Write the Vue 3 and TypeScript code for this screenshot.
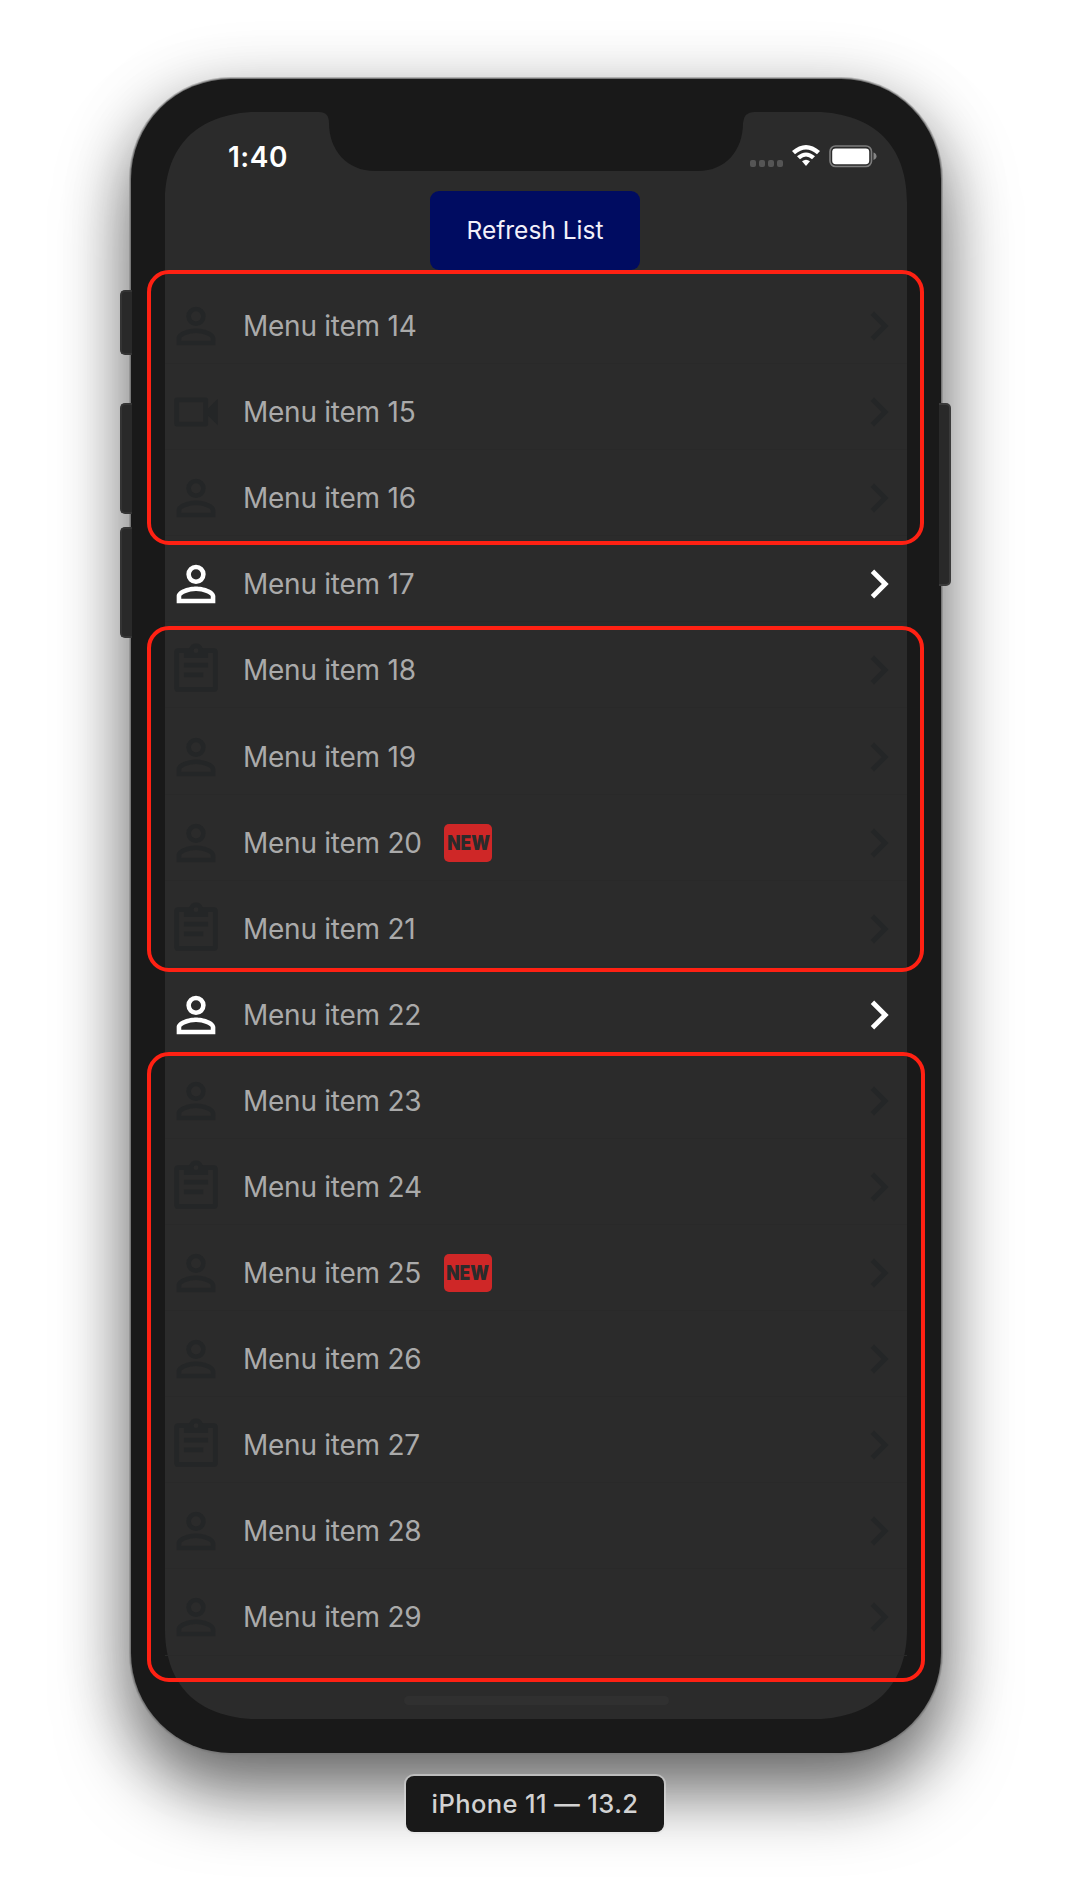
<script setup lang="ts">
type IconName = 'person' | 'video' | 'clipboard'

interface MenuItem {
  id: number
  icon: IconName
  active?: boolean
  isNew?: boolean
}

const icons: Record<IconName, string> = {
  person:
    'M12 4a4 4 0 1 1 0 8 4 4 0 0 1 0-8m0 1.9a2.1 2.1 0 1 0 0 4.2 2.1 2.1 0 0 0 0-4.2M12 13c2.67 0 8 1.34 8 4v3H4v-3c0-2.66 5.33-4 8-4m0 1.9c-2.97 0-6.1 1.46-6.1 2.1v1.1h12.2V17c0-.64-3.13-2.1-6.1-2.1',
  video:
    'M15 8v8H5V8h10m1-2H4a1 1 0 0 0-1 1v10a1 1 0 0 0 1 1h12a1 1 0 0 0 1-1v-3.5l4 4v-11l-4 4V7a1 1 0 0 0-1-1z',
  clipboard:
    'M19.4 3h-4.58C14.4 1.84 13.3 1 12 1s-2.4.84-2.82 2H4.6A1.6 1.6 0 0 0 3 4.6v14.8A1.6 1.6 0 0 0 4.6 21h14.8a1.6 1.6 0 0 0 1.6-1.6V4.6A1.6 1.6 0 0 0 19.4 3M12 3a1 1 0 1 1 0 2 1 1 0 0 1 0-2M7 7h10V5h2v14H5V5h2v2m10 4H7V9h10v2m-2 4H7v-2h8v2z',
}

const items: MenuItem[] = [
  { id: 14, icon: 'person' },
  { id: 15, icon: 'video' },
  { id: 16, icon: 'person' },
  { id: 17, icon: 'person', active: true },
  { id: 18, icon: 'clipboard' },
  { id: 19, icon: 'person' },
  { id: 20, icon: 'person', isNew: true },
  { id: 21, icon: 'clipboard' },
  { id: 22, icon: 'person', active: true },
  { id: 23, icon: 'person' },
  { id: 24, icon: 'clipboard' },
  { id: 25, icon: 'person', isNew: true },
  { id: 26, icon: 'person' },
  { id: 27, icon: 'clipboard' },
  { id: 28, icon: 'person' },
  { id: 29, icon: 'person' },
]
</script>

<template>
  <main class="stage">
    <div class="device">
      <span class="side-key mute"></span>
      <span class="side-key vol-up"></span>
      <span class="side-key vol-down"></span>
      <span class="side-key power"></span>

      <div class="screen">
        <svg class="glass" viewBox="0 0 742 1607" aria-hidden="true">
          <path
            d="M86 0H154Q164 0 164 11C164 38 182 59 210 59H533C561 59 578 38 578 11Q579 0 589 0H656C716 4 742 40 742 90V1517C742 1567 716 1603 656 1607H86C26 1603 0 1567 0 1517V90C0 40 26 4 86 0Z"
          />
        </svg>

        <header class="status">
          <span class="clock">1:40</span>
          <div class="indicators">
            <span class="cell"><i></i><i></i><i></i><i></i></span>
            <svg class="wifi" viewBox="0 0 28 22" aria-hidden="true">
              <path d="M0 6.1Q14-5.9 28 6.1L25 9.2Q14-.4 3 9.2Z" />
              <path d="M5 11.2Q14 3.6 23 11.2L20 14.2Q14 9 8 14.2Z" />
              <path d="M10 16.3Q14 13.1 18 16.3L14 21Z" />
            </svg>
            <svg class="battery" viewBox="0 0 48 23" aria-hidden="true">
              <rect x="1" y="1" width="41.5" height="20.5" rx="5.5" fill="none" stroke="#7d7d7d" stroke-width="1.6" />
              <rect x="3.2" y="3.4" width="37" height="15.8" rx="3.4" fill="#fff" />
              <path d="M44.5 7.6Q47.5 8.6 47.5 11.3T44.5 15Z" fill="#858585" />
            </svg>
          </div>
        </header>

        <button class="refresh" type="button"><span>Refresh List</span></button>

        <ul class="menu">
          <li v-for="item in items" :key="item.id" class="row" :class="{ active: item.active }">
            <svg class="icon" viewBox="0 0 24 24" aria-hidden="true"><path :d="icons[item.icon]" /></svg>
            <span class="label">Menu item {{ item.id }}</span>
            <span v-if="item.isNew" class="badge"><b>NEW</b></span>
            <svg class="icon chevron" viewBox="0 0 24 24" aria-hidden="true">
              <path d="M10 6 8.59 7.41 13.17 12l-4.58 4.59L10 18l6-6z" />
            </svg>
          </li>
        </ul>

        <div class="home-bar"></div>
      </div>
    </div>

    <div class="caption">iPhone 11 — 13.2</div>

    <div class="mark mark-a"></div>
    <div class="mark mark-b"></div>
    <div class="mark mark-c"></div>
  </main>
</template>

<style>
body {
  margin: 0;
  background: #fff;
}
</style>

<style scoped>
.stage {
  position: relative;
  box-sizing: border-box;
  width: 1072px;
  height: 1904px;
  padding-top: 79px;
  overflow: hidden;
  display: flex;
  flex-direction: column;
  align-items: center;
  background: #fff;
  font-family: Inter, 'Liberation Sans', sans-serif;
}
.device {
  position: relative;
  box-sizing: border-box;
  width: 810px;
  height: 1674px;
  padding: 33px 34px 34px;
  border-radius: 100px;
  background: #191919;
  box-shadow:
    0 0 0 1px #777,
    0 0 0 2px rgba(120, 120, 120, 0.45),
    0 40px 70px rgba(0, 0, 0, 0.52),
    0 10px 70px rgba(0, 0, 0, 0.2);
}
.side-key {
  position: absolute;
  box-sizing: border-box;
  width: 12px;
  background: #292929;
  border: 2px solid #343434;
  border-right: 0;
  border-radius: 5px 0 0 5px;
  left: -11px;
}
.mute {
  top: 211px;
  height: 65px;
}
.vol-up {
  top: 324px;
  height: 111px;
}
.vol-down {
  top: 448px;
  height: 111px;
}
.power {
  top: 324px;
  left: auto;
  right: -10px;
  height: 183px;
  border: 2px solid #3a3a3a;
  border-left: 0;
  border-radius: 0 5px 5px 0;
}
.screen {
  position: relative;
  width: 742px;
  height: 1607px;
  display: flex;
  flex-direction: column;
  align-items: center;
}
.glass {
  position: absolute;
  inset: 0;
  width: 742px;
  height: 1607px;
  fill: #2b2b2b;
}
.status {
  position: relative;
  box-sizing: border-box;
  width: 100%;
  height: 79px;
  padding: 0 30px 0 63px;
  display: flex;
  justify-content: space-between;
}
.clock {
  margin-top: 28px;
  line-height: 34px;
  color: #fff;
  font-size: 28px;
  font-weight: 600;
  letter-spacing: 0.5px;
}
.indicators {
  display: flex;
  align-items: flex-start;
  padding-top: 33px;
}
.cell {
  display: flex;
  gap: 3px;
  margin: 15px 9px 0 0;
}
.cell i {
  width: 6px;
  height: 7px;
  border-radius: 2px;
  background: #555;
}
.wifi {
  width: 28px;
  height: 22px;
  margin-right: 9px;
  fill: #fff;
}
.battery {
  width: 48px;
  height: 23px;
}
.refresh {
  position: relative;
  width: 210px;
  height: 79px;
  margin-right: 2px;
  padding: 0;
  border: 0;
  border-radius: 9px;
  background: #000c61;
  color: #f3f1fa;
  font: 400 24.5px/79px Inter, 'Liberation Sans', sans-serif;
}
.menu {
  position: relative;
  width: 100%;
  margin: 8px 0 0;
  padding: 0;
  list-style: none;
}
.row {
  box-sizing: border-box;
  height: 86.1px;
  padding: 11px 0 0 1.5px;
  display: flex;
  align-items: center;
  border-bottom: 1px solid #292929;
}
.icon {
  flex: none;
  width: 58px;
  height: 58px;
  fill: #242627;
}
.active .icon {
  fill: #fff;
}
.label {
  margin-left: 18.5px;
  color: #aaa;
  font-size: 28px;
  line-height: 34px;
  letter-spacing: -0.25px;
  white-space: nowrap;
}
.badge {
  display: flex;
  align-items: center;
  justify-content: center;
  width: 48px;
  height: 38px;
  margin-left: 22.5px;
  border-radius: 5px;
  background: #cf2727;
  color: #2b2b2b;
}
.badge b {
  font-size: 20px;
  font-weight: 900;
  line-height: 38px;
  transform: scaleX(0.87);
}
.chevron {
  margin-left: auto;
  margin-right: -1px;
}
.home-bar {
  position: relative;
  width: 265px;
  height: 9px;
  margin-top: 40px;
  border-radius: 5px;
  background: #303030;
}
.caption {
  width: 258px;
  height: 56px;
  margin-top: 23px;
  margin-right: 2px;
  border-radius: 8px;
  background: #191919;
  box-shadow: 0 0 0 2px rgba(225, 225, 225, 0.5);
  color: #d2d2d2;
  font-size: 25.5px;
  font-weight: 500;
  line-height: 56px;
  letter-spacing: 0.4px;
  text-align: center;
  white-space: nowrap;
  z-index: 1;
}
.mark {
  position: absolute;
  box-sizing: border-box;
  left: 147px;
  width: 777px;
  border: 4px solid #ff2113;
  border-radius: 22px;
}
.mark-a {
  top: 270px;
  height: 275px;
}
.mark-b {
  top: 626px;
  height: 346px;
}
.mark-c {
  top: 1052px;
  width: 778px;
  height: 630px;
}
</style>
